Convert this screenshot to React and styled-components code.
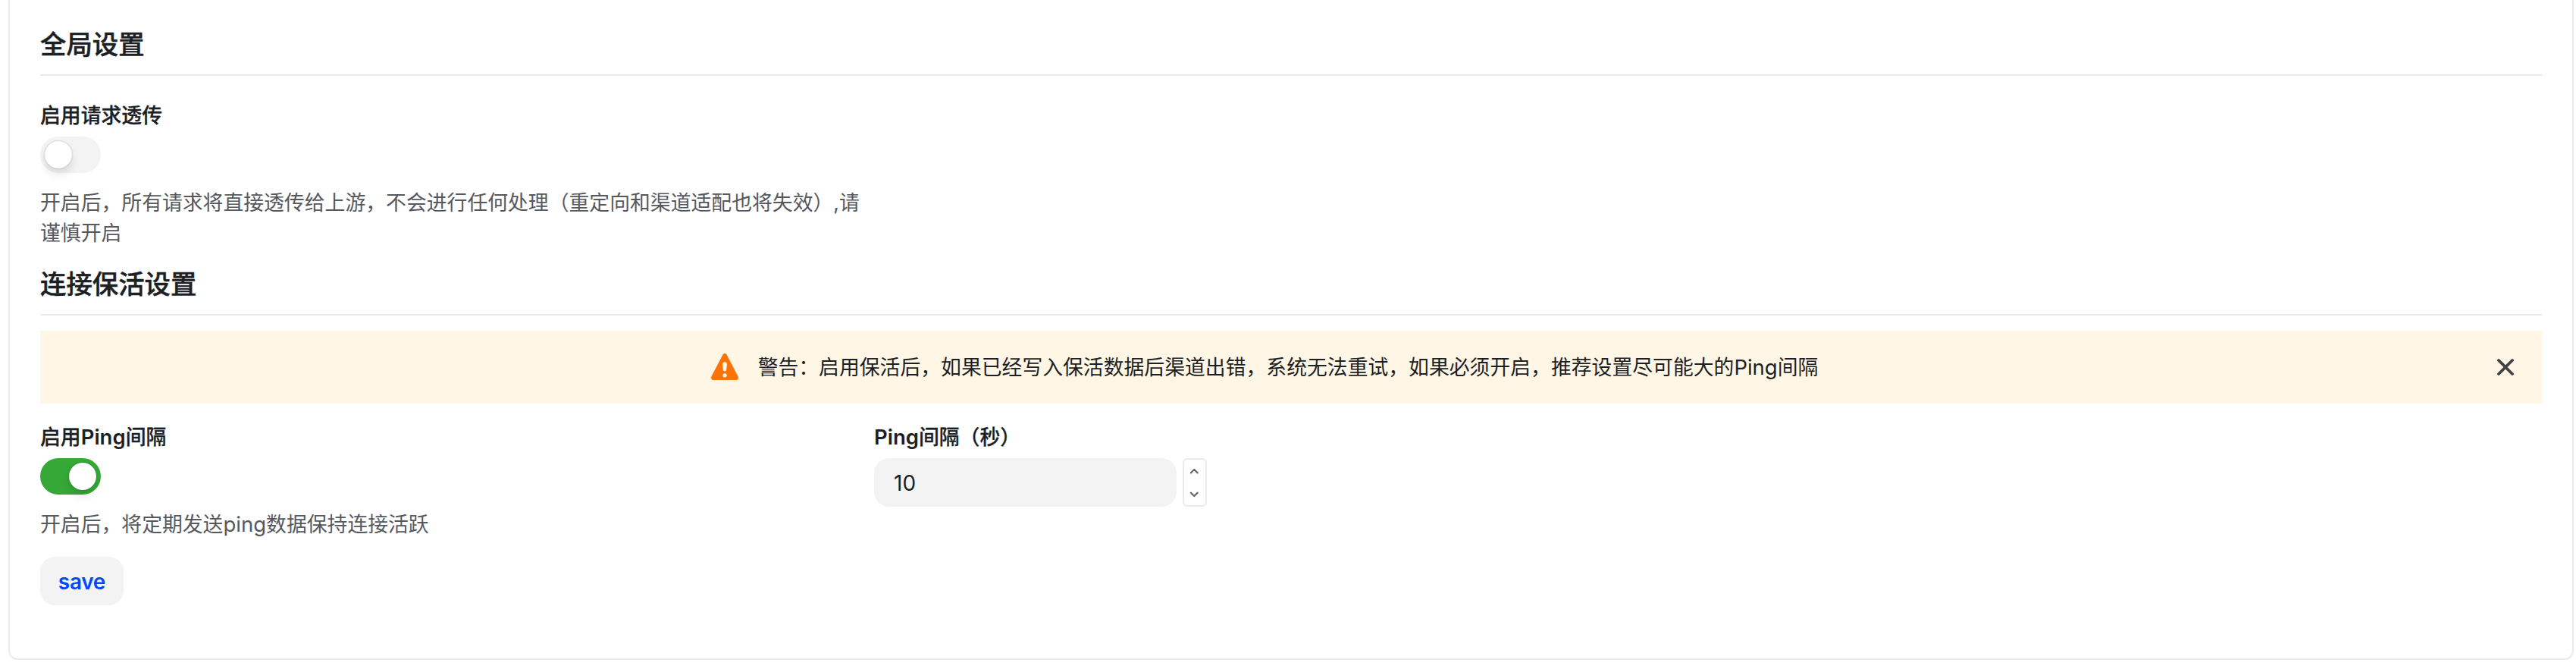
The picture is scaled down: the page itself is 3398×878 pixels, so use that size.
import React, { useState } from "react";
import styled, { createGlobalStyle } from "styled-components";

const GlobalStyle = createGlobalStyle`
  * { box-sizing: border-box; }
  body {
    margin: 0;
    background: #fff;
    color: #1c1f23;
    font-family: Inter, "Noto Sans CJK SC", sans-serif;
    font-size: 26.84px;
    line-height: 40px;
  }
`;

const Page = styled.main`
  display: flow-root;
  height: 878px;
  overflow: hidden;
`;

const Card = styled.section`
  height: 882px;
  margin: -12px 3px 0 11px;
  padding: 40px;
  border: 2px solid #ebebec;
  border-radius: 12px;
  background: #fff;
`;

const SectionTitle = styled.h5`
  display: flex;
  align-items: flex-end;
  height: ${(p) => p.$height}px;
  margin: 0 0 ${(p) => p.$gap}px;
  padding-bottom: 19px;
  border-bottom: 2px solid #ebebec;
  font-size: 34.4px;
  font-weight: 500;
  -webkit-text-stroke: 0.5px currentColor;
`;

const Columns = styled.div`
  display: grid;
  grid-template-columns: repeat(3, 1fr);
`;

const Field = styled.div`
  display: flex;
  flex-direction: column;
  align-items: flex-start;
  padding-top: 24px;
`;

const Label = styled.label`
  height: 40px;
  margin-bottom: 8px;
  font-weight: 500;
  -webkit-text-stroke: 0.3px currentColor;
  white-space: nowrap;
`;

const Latin = styled.span`
  font-size: 27.5px;
  font-weight: ${(p) => (p.$strong ? 600 : 400)};
  -webkit-text-stroke: 0;
`;

const Help = styled.p`
  width: 1090px;
  margin: 19px 0 0;
  color: #55595e;
`;

const Track = styled.button`
  display: flex;
  justify-content: ${(p) => (p.$on ? "flex-end" : "flex-start")};
  align-items: center;
  width: 80px;
  height: 48px;
  padding: 0 6px;
  border: 0;
  border-radius: 24px;
  background: ${(p) => (p.$on ? "#35a837" : "#f3f3f3")};
`;

const Knob = styled.span`
  width: 36px;
  height: 36px;
  border-radius: 50%;
  background: #fff;
  box-shadow: 0 8px 12px rgba(0, 0, 0, 0.1), 0 0 2px rgba(0, 0, 0, 0.3);
`;

const Banner = styled.div`
  display: flex;
  align-items: center;
  height: 96px;
  padding: 0 32px;
  background: #fff6e5;
`;

const BannerBody = styled.div`
  display: flex;
  flex: 1;
  align-items: center;
  justify-content: center;
  gap: 24px;
  white-space: nowrap;

  svg { flex: none; }
`;

const CloseButton = styled.button`
  display: flex;
  width: 32px;
  height: 32px;
  margin-left: 40px;
  padding: 0;
  border: 0;
  background: none;
`;

const NumberRow = styled.div`
  display: flex;
  gap: 8px;
`;

const NumberInput = styled.input`
  width: 399px;
  height: 64px;
  padding: 2px 26px 0;
  border: 0;
  border-radius: 20px;
  background: #f3f3f3;
  color: #1c1f23;
  font: 28px Inter, sans-serif;
`;

const Stepper = styled.div`
  display: flex;
  flex-direction: column;
  width: 32px;
  height: 64px;
  border: 2px solid #ebebec;
  border-radius: 6px;
`;

const Step = styled.button`
  display: flex;
  flex: 1;
  align-items: center;
  justify-content: center;
  padding: 0;
  border: 0;
  background: none;
`;

const SaveButton = styled.button`
  width: 110px;
  height: 64px;
  margin-top: 23px;
  padding: 2px 0 0;
  border: 0;
  border-radius: 20px;
  background: #f3f3f3;
  color: #0048ff;
  font: 600 28px Inter, sans-serif;
  letter-spacing: -0.3px;
`;

function Switch({ initial }) {
  const [on, setOn] = useState(initial);
  return (
    <Track type="button" role="switch" aria-checked={on} $on={on} onClick={() => setOn(!on)}>
      <Knob />
    </Track>
  );
}

const WarningIcon = () => (
  <svg width="40" height="40" viewBox="0 0 24 24">
    <path
      fill="#fc7408"
      fillRule="evenodd"
      d="M10.4 2.2C11.1.9 12.9.9 13.6 2.2L22.6 19.5C23.2 20.8 22.4 22.2 21 22.2H3C1.6 22.2.8 20.8 1.4 19.5L10.4 2.2ZM12 8c-1.1 0-1.9.9-1.8 1.9l.5 4.1a1.3 1.3 0 0 0 2.6 0l.5-4.1C13.9 8.9 13.1 8 12 8Zm0 8.9a1.6 1.6 0 1 0 0 3.2 1.6 1.6 0 0 0 0-3.2Z"
    />
  </svg>
);

const CloseIcon = () => (
  <svg width="32" height="32" viewBox="0 0 32 32" fill="none" stroke="#404244" strokeWidth="3.8" strokeLinecap="round">
    <path d="M7 7l18 18M25 7L7 25" />
  </svg>
);

const Chevron = ({ down }) => (
  <svg width="16" height="16" viewBox="0 0 16 16" fill="none" stroke="#68696b" strokeWidth="2.2" strokeLinecap="round" strokeLinejoin="round">
    <path d={down ? "M2.9 6.6L7.3 11L11.7 6.6" : "M2.9 10.4L7.3 6L11.7 10.4"} />
  </svg>
);

export default function App() {
  const [seconds, setSeconds] = useState(10);
  return (
    <Page>
      <GlobalStyle />
      <Card>
        <SectionTitle $height={70} $gap={8}>全局设置</SectionTitle>
        <Columns>
          <Field>
            <Label>启用请求透传</Label>
            <Switch initial={false} />
            <Help>开启后，所有请求将直接透传给上游，不会进行任何处理（重定向和渠道适配也将失效）,请谨慎开启</Help>
          </Field>
        </Columns>
        <SectionTitle $height={89} $gap={20}>连接保活设置</SectionTitle>
        <Banner>
          <BannerBody>
            <WarningIcon />
            <span>警告：启用保活后，如果已经写入保活数据后渠道出错，系统无法重试，如果必须开启，推荐设置尽可能大的<Latin>Ping</Latin>间隔</span>
          </BannerBody>
          <CloseButton type="button" aria-label="关闭"><CloseIcon /></CloseButton>
        </Banner>
        <Columns>
          <Field>
            <Label>启用<Latin $strong>Ping</Latin>间隔</Label>
            <Switch initial={true} />
            <Help>开启后，将定期发送<Latin>ping</Latin>数据保持连接活跃</Help>
          </Field>
          <Field>
            <Label><Latin $strong>Ping</Latin>间隔（秒）</Label>
            <NumberRow>
              <NumberInput value={seconds} onChange={(e) => setSeconds(Number(e.target.value) || 0)} />
              <Stepper>
                <Step type="button" aria-label="增加" onClick={() => setSeconds(seconds + 1)}><Chevron /></Step>
                <Step type="button" aria-label="减少" onClick={() => setSeconds(seconds - 1)}><Chevron down /></Step>
              </Stepper>
            </NumberRow>
          </Field>
        </Columns>
        <SaveButton type="button">save</SaveButton>
      </Card>
    </Page>
  );
}
